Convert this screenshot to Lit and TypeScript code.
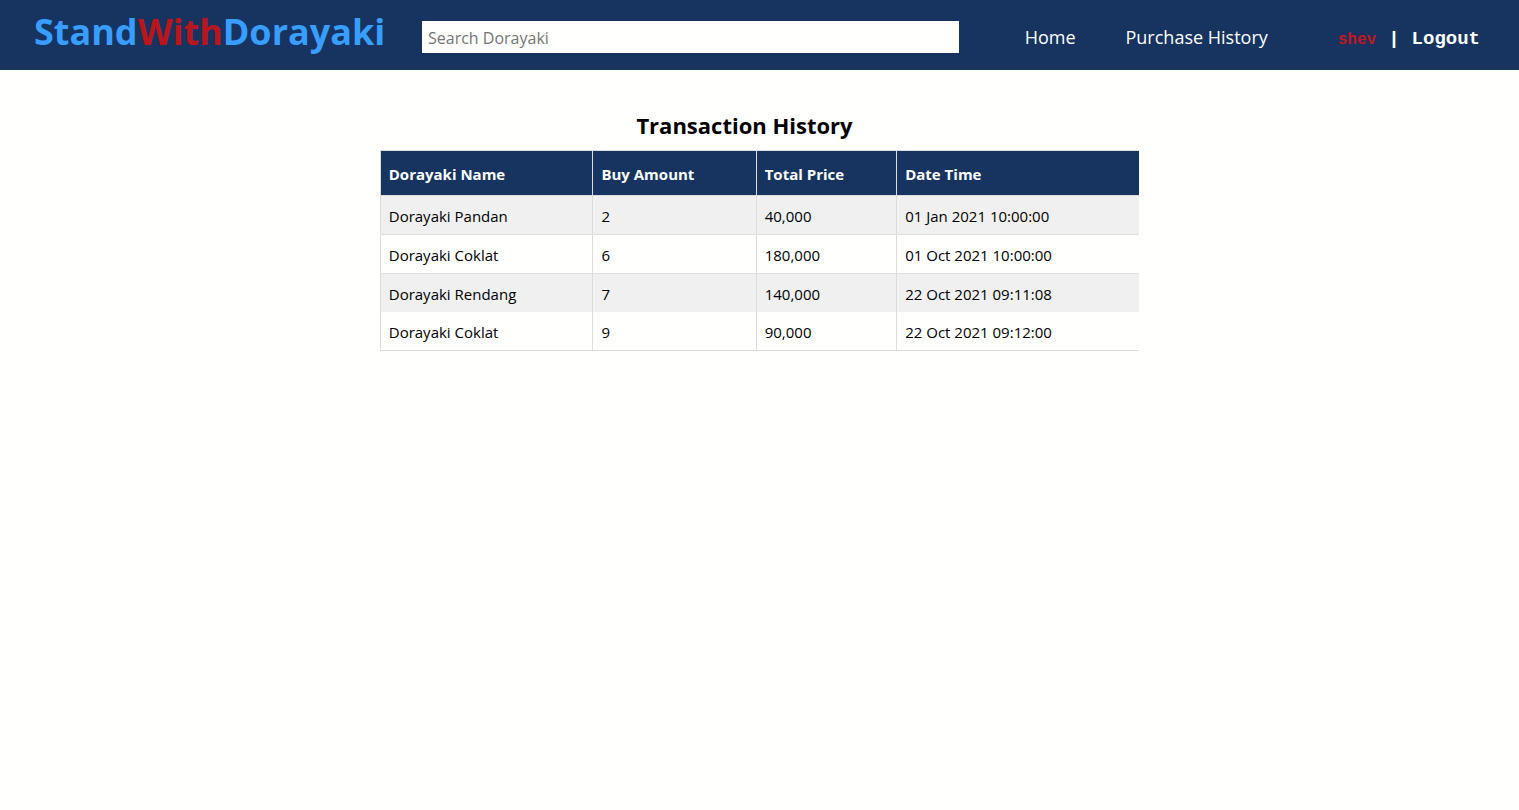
import { LitElement, html, css } from "lit";
import { customElement, state } from "lit/decorators.js";

interface Transaction {
  name: string;
  amount: number;
  total: number;
  time: string;
}

@customElement("site-header")
class SiteHeader extends LitElement {
  static styles = css`
    :host {
      display: block;
    }
    .bar {
      box-sizing: border-box;
      display: flex;
      align-items: center;
      height: 70px;
      padding: 0 39px 0 34px;
      background: #16345f;
    }
    a {
      color: inherit;
      text-decoration: none;
      white-space: nowrap;
    }
    .logo {
      flex: none;
      width: 388px;
      padding-bottom: 6px;
      color: #379eff;
      font-size: 36px;
      font-weight: 700;
      line-height: 50px;
    }
    .accent {
      color: #b9151d;
    }
    .search {
      flex: 1;
      min-width: 120px;
      margin-top: 4px;
    }
    .search input {
      display: block;
      box-sizing: border-box;
      width: 100%;
      height: 32px;
      padding: 2px 6px 0;
      border: 0;
      border-radius: 0;
      background: #fffffe;
      color: #000;
      font: inherit;
      font-size: 16px;
    }
    .search input::placeholder {
      color: #757575;
      opacity: 1;
    }
    .links {
      display: flex;
      gap: 50px;
      margin: 4px 70px 0 66px;
      color: #fffffe;
      font-size: 18px;
      line-height: 24px;
    }
    .account {
      display: flex;
      align-items: baseline;
      gap: 12px;
      margin-top: 8px;
      color: #fffffe;
      font-family: "Liberation Mono", monospace;
      font-size: 19px;
      font-weight: 700;
      line-height: 24px;
    }
    .user {
      color: #c01722;
      font-size: 16px;
    }
  `;

  render() {
    return html`
      <header class="bar">
        <a class="logo" href="#">Stand<span class="accent">With</span>Dorayaki</a>
        <form class="search" role="search">
          <input type="search" aria-label="Search Dorayaki" placeholder="Search Dorayaki" />
        </form>
        <nav class="links">
          <a href="#">Home</a>
          <a href="#">Purchase History</a>
        </nav>
        <div class="account">
          <span class="user">shev</span>
          <span>|</span>
          <a href="#">Logout</a>
        </div>
      </header>
    `;
  }
}

@customElement("app-root")
class AppRoot extends LitElement {
  static styles = css`
    :host {
      display: block;
      min-height: 100vh;
      background: #fffffe;
      color: #000;
      font-family: "Open Sans", "Noto Sans", sans-serif;
      font-size: 15px;
    }
    .content {
      width: 50%;
      margin: 0 auto;
      padding-top: 38px;
    }
    h1 {
      margin: 0 30px 8px 0;
      font-size: 22px;
      font-weight: 700;
      line-height: 34px;
      text-align: center;
    }
    table {
      width: 100%;
      table-layout: fixed;
      border-collapse: separate;
      border-spacing: 0;
      border-top: 1px solid #dddddc;
    }
    th,
    td {
      box-sizing: border-box;
      padding: 9px 8px 7px;
      border-bottom: 1px solid #dddddc;
      border-left: 1px solid #dddddc;
      line-height: 22px;
      text-align: left;
    }
    th {
      padding: 12px 8px 10px;
      background: #16345f;
      color: #fffffe;
    }
    .name {
      width: 28%;
    }
    .amount {
      width: 21.5%;
    }
    .price {
      width: 18.5%;
    }
    tbody tr:nth-child(odd) {
      background: #f0f0f0;
    }
    tbody tr:nth-child(3) td {
      border-bottom: 0;
    }
  `;

  @state()
  private transactions: Transaction[] = [
    { name: "Dorayaki Pandan", amount: 2, total: 40000, time: "01 Jan 2021 10:00:00" },
    { name: "Dorayaki Coklat", amount: 6, total: 180000, time: "01 Oct 2021 10:00:00" },
    { name: "Dorayaki Rendang", amount: 7, total: 140000, time: "22 Oct 2021 09:11:08" },
    { name: "Dorayaki Coklat", amount: 9, total: 90000, time: "22 Oct 2021 09:12:00" },
  ];

  render() {
    return html`
      <site-header></site-header>
      <main class="content">
        <h1>Transaction History</h1>
        <table>
          <thead>
            <tr>
              <th class="name" scope="col">Dorayaki Name</th>
              <th class="amount" scope="col">Buy Amount</th>
              <th class="price" scope="col">Total Price</th>
              <th scope="col">Date Time</th>
            </tr>
          </thead>
          <tbody>
            ${this.transactions.map(
              (t) => html`
                <tr>
                  <td>${t.name}</td>
                  <td>${t.amount}</td>
                  <td>${t.total.toLocaleString("en-US")}</td>
                  <td>${t.time}</td>
                </tr>
              `
            )}
          </tbody>
        </table>
      </main>
    `;
  }
}
